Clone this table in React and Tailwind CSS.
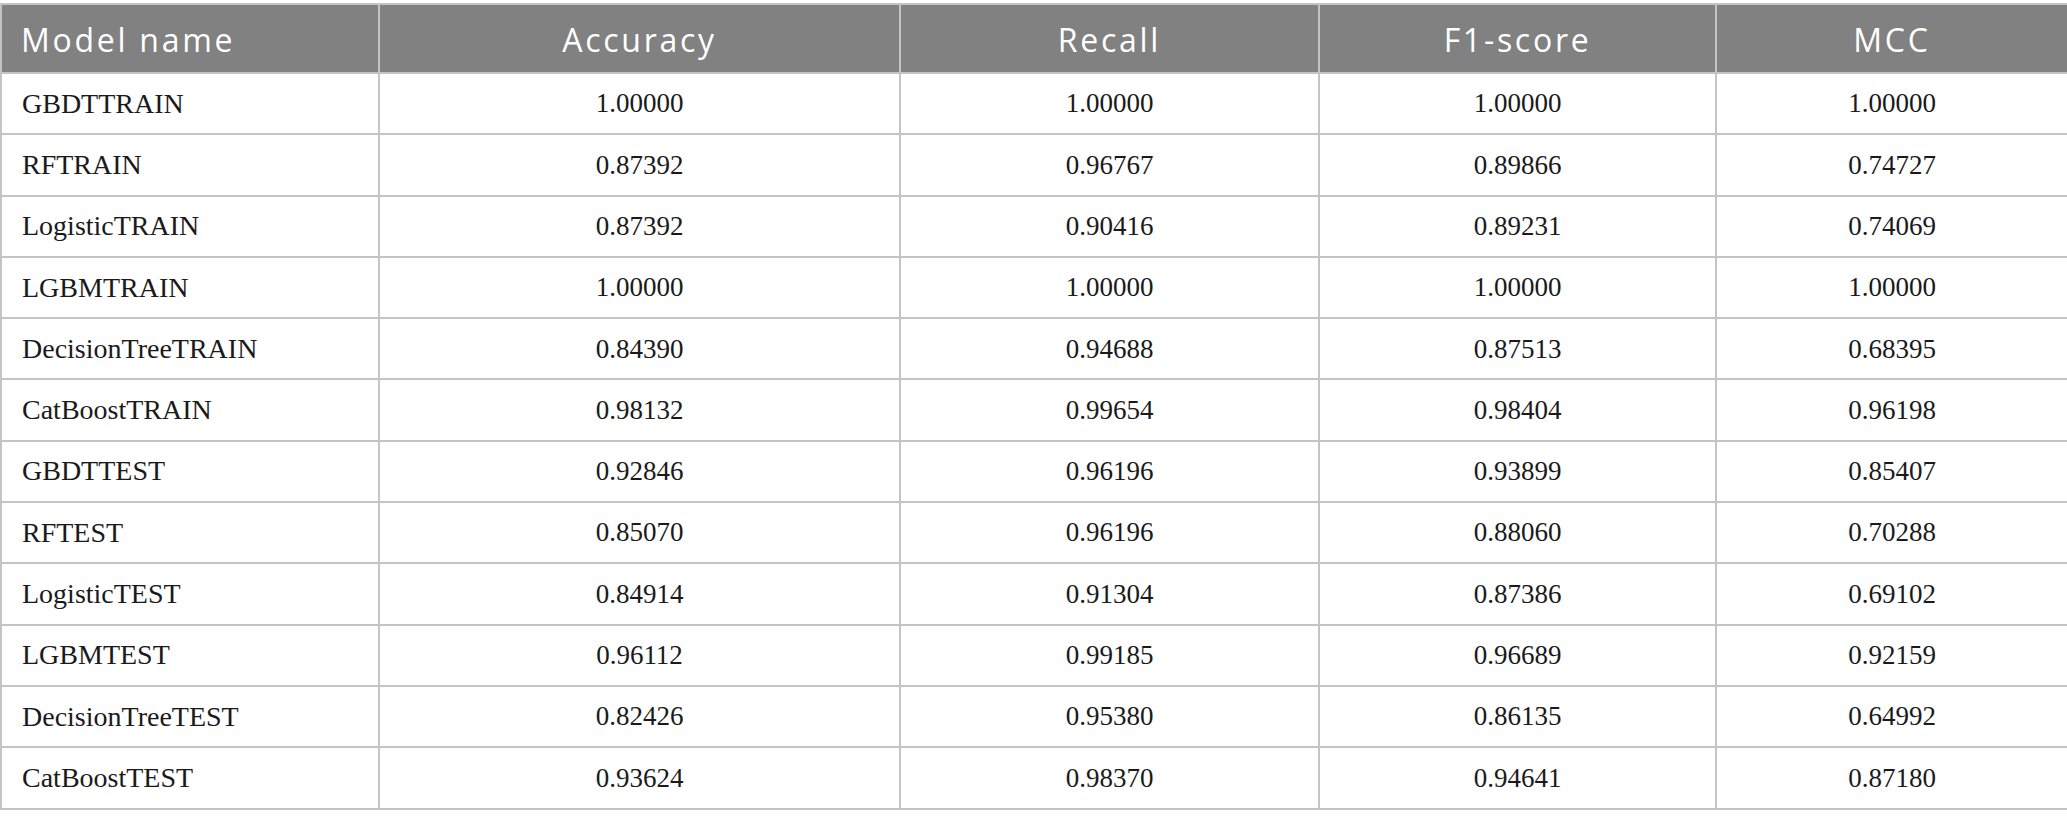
const columns = ['Model name', 'Accuracy', 'Recall', 'F1-score', 'MCC'];

const rows = [
  ['GBDTTRAIN', '1.00000', '1.00000', '1.00000', '1.00000'],
  ['RFTRAIN', '0.87392', '0.96767', '0.89866', '0.74727'],
  ['LogisticTRAIN', '0.87392', '0.90416', '0.89231', '0.74069'],
  ['LGBMTRAIN', '1.00000', '1.00000', '1.00000', '1.00000'],
  ['DecisionTreeTRAIN', '0.84390', '0.94688', '0.87513', '0.68395'],
  ['CatBoostTRAIN', '0.98132', '0.99654', '0.98404', '0.96198'],
  ['GBDTTEST', '0.92846', '0.96196', '0.93899', '0.85407'],
  ['RFTEST', '0.85070', '0.96196', '0.88060', '0.70288'],
  ['LogisticTEST', '0.84914', '0.91304', '0.87386', '0.69102'],
  ['LGBMTEST', '0.96112', '0.99185', '0.96689', '0.92159'],
  ['DecisionTreeTEST', '0.82426', '0.95380', '0.86135', '0.64992'],
  ['CatBoostTEST', '0.93624', '0.98370', '0.94641', '0.87180'],
];

const App = () => {
  return (
    <div className="min-h-screen bg-white pt-[3px]">
      <table className="w-[2067px] table-fixed border-collapse">
        <colgroup>
          <col className="w-[378px]" />
          <col className="w-[521px]" />
          <col className="w-[419px]" />
          <col className="w-[397px]" />
          <col className="w-[352px]" />
        </colgroup>
        <thead>
          <tr className="h-[69px] bg-[#808180]">
            {columns.map((c, i) => (
              <th
                key={c}
                className={`border-2 border-[#c4c4c4] pt-[3px] font-['Open_Sans',sans-serif] text-[32px] font-normal tracking-[0.085em] text-white ${
                  i === 0 ? 'pl-[19px] text-left' : 'text-center'
                }`}
              >
                {c}
              </th>
            ))}
          </tr>
        </thead>
        <tbody>
          {rows.map((r) => (
            <tr key={r[0]} className="h-[61.3px]">
              {r.map((v, i) => (
                <td
                  key={i}
                  className={`border-2 border-[#c4c4c4] font-['Liberation_Serif',serif] text-[#1a1a1a] ${
                    i === 0 ? 'pl-[20px] text-left text-[28px]' : 'text-center text-[27px]'
                  }`}
                >
                  {v}
                </td>
              ))}
            </tr>
          ))}
        </tbody>
      </table>
    </div>
  );
};

export default App;
